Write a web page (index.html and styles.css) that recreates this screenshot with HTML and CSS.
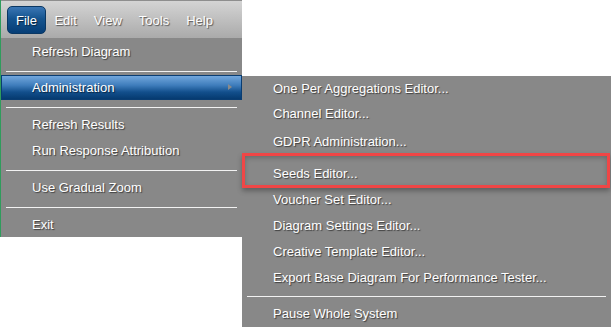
FILE: index.html
```html
<!DOCTYPE html>
<html lang="en">
<head>
    <meta charset="UTF-8">
    <title>File Menu</title>
    <link rel="stylesheet" href="styles.css">
</head>
<body>
    <div class="screen">
        <div class="file-menu">
            <div class="menubar">
                <span class="menubar-item active">File</span>
                <span class="menubar-item">Edit</span>
                <span class="menubar-item">View</span>
                <span class="menubar-item">Tools</span>
                <span class="menubar-item">Help</span>
            </div>
            <ul class="menu">
                <li class="menu-item">Refresh Diagram</li>
                <li class="separator"></li>
                <li class="menu-item selected">Administration<span class="arrow"></span></li>
                <li class="separator"></li>
                <li class="menu-item">Refresh Results</li>
                <li class="menu-item">Run Response Attribution</li>
                <li class="separator"></li>
                <li class="menu-item">Use Gradual Zoom</li>
                <li class="separator"></li>
                <li class="menu-item">Exit</li>
            </ul>
        </div>

        <ul class="menu submenu">
            <li class="menu-item first">One Per Aggregations Editor...</li>
            <li class="menu-item">Channel Editor...</li>
            <li class="menu-item gdpr">GDPR Administration...</li>
            <li class="menu-item seeds">Seeds Editor...<span class="callout"></span></li>
            <li class="menu-item">Voucher Set Editor...</li>
            <li class="menu-item">Diagram Settings Editor...</li>
            <li class="menu-item">Creative Template Editor...</li>
            <li class="menu-item">Export Base Diagram For Performance Tester...</li>
            <li class="separator"></li>
            <li class="menu-item">Pause Whole System</li>
        </ul>
    </div>
</body>
</html>
```

FILE: styles.css
```css
body {
    margin: 0;
    background-color: #fff;
    font-family: "Liberation Sans", Arial, sans-serif;
    font-size: 13px;
    color: #fff;
    overflow: hidden;
}
.screen {
    display: flex;
    align-items: flex-start;
}
.file-menu {
    width: 242px;
    flex-shrink: 0;
    box-sizing: border-box;
    border-left: 1px solid #2f9c5c;
    background-color: #888;
}
.menubar {
    display: flex;
    align-items: center;
    height: 38px;
    box-sizing: border-box;
    border-top: 1px solid #8e8e8e;
    padding-top: 1px;
    background: linear-gradient(#d4d4d4, #aaaaaa);
}
.menubar-item {
    padding: 0 8.5px;
    text-shadow: 1px 1px 1px rgba(0, 0, 0, 0.55);
}
.menubar-item.active {
    display: flex;
    align-items: center;
    height: 28px;
    box-sizing: border-box;
    margin-left: 6px;
    padding: 0 8px;
    border: 1px solid #0a3763;
    border-radius: 5px;
    background: linear-gradient(#3a76b4 0%, #15548f 45%, #063e76 100%);
}
.menu {
    list-style: none;
    margin: 0;
    padding: 0;
}
.menu-item {
    position: relative;
    height: 26px;
    line-height: 26px;
    padding-left: 31px;
    white-space: nowrap;
    text-shadow: 1px 1px 1px rgba(0, 0, 0, 0.55);
}
.file-menu .menu-item {
    box-sizing: border-box;
    padding-top: 2px;
    line-height: 24px;
}
.separator {
    height: 1px;
    margin: 7px 5px 3px 5px;
    background-color: #f2f2f2;
}
.file-menu .menu-item.selected {
    height: 25px;
    line-height: 23px;
    margin-top: 1px;
    padding-top: 0;
    border: 1px solid #0a3d72;
    padding-left: 30px;
    background: linear-gradient(#72a7dc 0%, #3f7dbc 40%, #124f8c 70%, #053a70 100%);
}
.arrow {
    position: absolute;
    top: 8px;
    right: 9px;
    width: 0;
    height: 0;
    border-top: 3.5px solid transparent;
    border-bottom: 3.5px solid transparent;
    border-left: 4px solid #8a8a8a;
}
.submenu {
    flex: 1;
    margin-top: 76px;
    background-color: #888;
}
.submenu .menu-item.first {
    height: 25px;
    line-height: 25px;
}
.submenu .gdpr {
    margin-top: 2px;
}
.submenu .seeds {
    margin-top: 6px;
}
.submenu .separator {
    margin: 5px 5px 4px 5px;
}
.callout {
    position: absolute;
    top: -8px;
    bottom: -1px;
    left: 0;
    right: 1px;
    border: 3px solid #f04646;
    box-shadow: inset 0 2px 5px rgba(0, 0, 0, 0.22), 0 3px 5px rgba(0, 0, 0, 0.3);
}
```
